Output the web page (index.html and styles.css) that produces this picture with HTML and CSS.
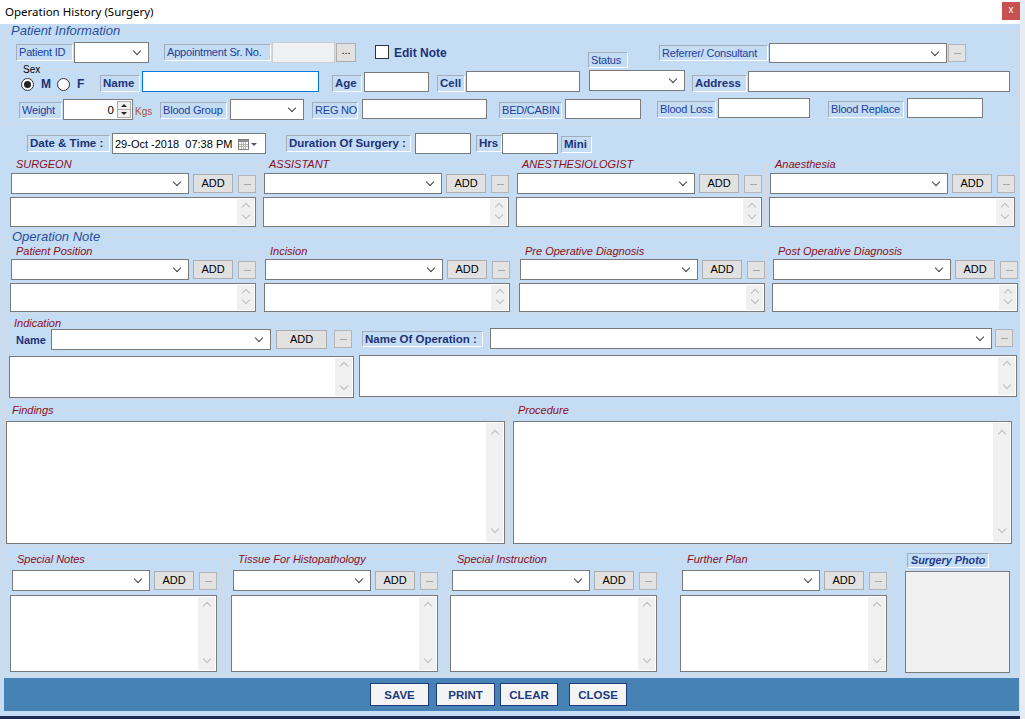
FILE: index.html
```html
<!DOCTYPE html>
<html lang="en">
  <head>
    <meta charset="UTF-8" />
    <title>Operation History (Surgery)</title>
    <link rel="stylesheet" href="styles.css">
  </head>
  <body>
    <div class="screen">
      <div class="window">
        <div class="titlebar">
          <span class="title">Operation History (Surgery)</span>
          <span class="close">x</span>
        </div>

        <div class="client">
          <!-- Patient information -->
          <fieldset class="patient">
            <legend>Patient Information</legend>
            <div class="row r1">
              <span class="lb pid-l">Patient ID</span>
              <span class="cb pid-c"></span>
              <span class="lb appt-l">Appointment Sr. No.</span>
              <span class="tb dis appt-t"></span>
              <span class="dots appt-b">...</span>
              <span class="chk edit-chk"></span>
              <span class="edit-txt">Edit Note</span>
              <span class="lb status-l">Status</span>
              <span class="lb ref-l">Referrer/ Consultant</span>
              <span class="cb ref-c"></span>
              <span class="mini ref-b"></span>
            </div>
            <div class="row r2">
              <fieldset class="sex">
                <legend>Sex</legend>
                <div class="opts">
                  <span class="radio on"></span><b class="opt-m">M</b>
                  <span class="radio opt-f"></span><b class="opt-ft">F</b>
                </div>
              </fieldset>
              <span class="lb b name-l">Name</span>
              <span class="tb name-t"></span>
              <span class="lb b age-l">Age</span>
              <span class="tb age-t"></span>
              <span class="lb b cell-l">Cell</span>
              <span class="tb cell-t"></span>
              <span class="cb status-c"></span>
              <span class="lb b addr-l">Address</span>
              <span class="tb addr-t"></span>
            </div>
            <div class="row r3">
              <span class="lb wt-l">Weight</span>
              <span class="tb num wt-n"><span class="val">0</span><span class="spin"><i></i><i></i></span></span>
              <span class="kgs">Kgs</span>
              <span class="lb bg-l">Blood Group</span>
              <span class="cb bg-c"></span>
              <span class="lb reg-l">REG NO</span>
              <span class="tb reg-t"></span>
              <span class="lb bed-l">BED/CABIN</span>
              <span class="tb bed-t"></span>
              <span class="lb loss-l">Blood Loss</span>
              <span class="tb loss-t"></span>
              <span class="lb repl-l">Blood Replace</span>
              <span class="tb repl-t"></span>
            </div>
          </fieldset>

          <!-- Date and duration -->
          <div class="row date-row">
            <span class="lb b dt-l">Date &amp; Time :</span>
            <span class="tb dtp">
              <span>29-Oct -2018&nbsp; 07:38 PM</span>
              <svg width="20" height="12" viewBox="0 0 20 12">
                <rect x="0.5" y="1.5" width="10" height="10" fill="#fff" stroke="#7d7d7d"/>
                <rect x="1" y="2" width="9" height="2" fill="#8c8c8c"/>
                <path d="M1 6.5H10M1 8.5H10M3.5 4V11M5.5 4V11M7.5 4V11" stroke="#b4b4b4"/>
                <path d="M13 5h6l-3 3z" fill="#4d5a73"/>
              </svg>
            </span>
            <span class="lb b dur-l">Duration Of Surgery :</span>
            <span class="tb dur-t"></span>
            <span class="lb b hrs-l">Hrs</span>
            <span class="tb hrs-t"></span>
            <span class="lb b min-l">Mini</span>
          </div>

          <!-- Team -->
          <div class="quad">
            <fieldset class="sec pick">
              <legend>SURGEON</legend>
              <div class="pick-row"><span class="cb"></span><span class="add">ADD</span><span class="mini"></span></div>
              <div class="memo"><span class="sb"></span></div>
            </fieldset>
            <fieldset class="sec pick">
              <legend>ASSISTANT</legend>
              <div class="pick-row"><span class="cb"></span><span class="add">ADD</span><span class="mini"></span></div>
              <div class="memo"><span class="sb"></span></div>
            </fieldset>
            <fieldset class="sec pick">
              <legend>ANESTHESIOLOGIST</legend>
              <div class="pick-row"><span class="cb"></span><span class="add">ADD</span><span class="mini"></span></div>
              <div class="memo"><span class="sb"></span></div>
            </fieldset>
            <fieldset class="sec pick">
              <legend>Anaesthesia</legend>
              <div class="pick-row"><span class="cb"></span><span class="add">ADD</span><span class="mini"></span></div>
              <div class="memo"><span class="sb"></span></div>
            </fieldset>
          </div>

          <!-- Operation note -->
          <fieldset class="opnote">
            <legend>Operation Note</legend>
            <div class="op-grid">
              <fieldset class="sec pick">
                <legend>Patient Position</legend>
                <div class="pick-row"><span class="cb"></span><span class="add">ADD</span><span class="mini"></span></div>
                <div class="memo"><span class="sb"></span></div>
              </fieldset>
              <fieldset class="sec pick">
                <legend>Incision</legend>
                <div class="pick-row"><span class="cb"></span><span class="add">ADD</span><span class="mini"></span></div>
                <div class="memo"><span class="sb"></span></div>
              </fieldset>
              <fieldset class="sec pick">
                <legend>Pre Operative Diagnosis</legend>
                <div class="pick-row"><span class="cb"></span><span class="add">ADD</span><span class="mini"></span></div>
                <div class="memo"><span class="sb"></span></div>
              </fieldset>
              <fieldset class="sec pick bare">
                <legend>Post Operative Diagnosis</legend>
                <div class="pick-row"><span class="cb"></span><span class="add">ADD</span><span class="mini"></span></div>
                <div class="memo"><span class="sb"></span></div>
              </fieldset>
            </div>

            <div class="ind-row">
              <fieldset class="sec ind">
                <legend>Indication</legend>
                <div class="row">
                  <span class="ind-name">Name</span>
                  <span class="cb ind-c"></span>
                  <span class="add">ADD</span>
                  <span class="mini"></span>
                </div>
                <div class="memo"><span class="sb"></span></div>
              </fieldset>
              <div class="noo">
                <div class="row noo-top">
                  <span class="lb b noo-l">Name Of Operation :</span>
                  <span class="cb noo-c"></span>
                  <span class="mini"></span>
                </div>
                <div class="memo"><span class="sb"></span></div>
              </div>
            </div>

            <div class="big-row">
              <fieldset class="sec big">
                <legend>Findings</legend>
                <div class="memo"><span class="sb"></span></div>
              </fieldset>
              <fieldset class="sec big proc">
                <legend>Procedure</legend>
                <div class="memo"><span class="sb"></span></div>
              </fieldset>
            </div>

            <div class="low-row">
              <fieldset class="sec low notes">
                <legend>Special Notes</legend>
                <div class="pick-row"><span class="cb"></span><span class="add">ADD</span><span class="mini"></span></div>
                <div class="memo"><span class="sb"></span></div>
              </fieldset>
              <fieldset class="sec low tissue">
                <legend>Tissue For Histopathology</legend>
                <div class="pick-row"><span class="cb"></span><span class="add">ADD</span><span class="mini"></span></div>
                <div class="memo"><span class="sb"></span></div>
              </fieldset>
              <fieldset class="sec low instr">
                <legend>Special Instruction</legend>
                <div class="pick-row"><span class="cb"></span><span class="add">ADD</span><span class="mini"></span></div>
                <div class="memo"><span class="sb"></span></div>
              </fieldset>
              <fieldset class="sec low plan">
                <legend>Further Plan</legend>
                <div class="pick-row"><span class="cb"></span><span class="add">ADD</span><span class="mini"></span></div>
                <div class="memo"><span class="sb"></span></div>
              </fieldset>
              <div class="photo">
                <span class="photo-l">Surgery Photo</span>
                <div class="photo-box"></div>
              </div>
            </div>
          </fieldset>

          <!-- Buttons -->
          <div class="footer">
            <button class="btn">SAVE</button>
            <button class="btn b-print">PRINT</button>
            <button class="btn b-clear">CLEAR</button>
            <button class="btn b-close">CLOSE</button>
          </div>
        </div>
      </div>
      <div class="edge"></div>
    </div>
  </body>
</html>
```

FILE: styles.css
```css
* {
  box-sizing: border-box;
}

body {
  margin: 0;
  font-family: "Liberation Sans", Arial, sans-serif;
  font-size: 11px;
  color: #000;
  background: #e6ecf2;
}

.screen {
  display: flex;
  width: 1025px;
  height: 719px;
  overflow: hidden;
}

.window {
  width: 1020px;
  height: 719px;
  display: flex;
  flex-direction: column;
  background: #c5dcf5;
  border-bottom: 3px solid #1d2b55;
}

.edge {
  width: 5px;
  background: #e6ecf2;
}

/* title bar */
.titlebar {
  height: 24px;
  flex: none;
  background: #fff;
  display: flex;
  justify-content: space-between;
  align-items: flex-start;
}

.title {
  margin: 4px 0 0 5px;
  font-family: "Noto Sans", "Liberation Sans", sans-serif;
  font-size: 11.5px;
  line-height: 15px;
}

.close {
  width: 18px;
  height: 18px;
  margin-top: 2px;
  background: #c75050;
  color: #fff;
  font-size: 10px;
  line-height: 16px;
  text-align: center;
}

/* common controls */
fieldset {
  margin: 0;
  padding: 0;
  min-width: 0;
  border: 1px solid #d3dae3;
}

legend {
  padding: 0 1px;
  font-style: italic;
}

.row {
  display: flex;
  align-items: flex-start;
}

.row > * {
  flex: none;
}

.lb {
  height: 17px;
  padding-left: 2px;
  border: 1px solid;
  border-color: #a3adb9 #fff #fff #a3adb9;
  color: #21409a;
  font-size: 11px;
  line-height: 15px;
  letter-spacing: -0.2px;
  white-space: nowrap;
  overflow: hidden;
}

.lb.b {
  font-weight: bold;
  font-size: 11.5px;
  letter-spacing: 0;
  color: #1c3378;
}

.tb {
  height: 21px;
  background: #fff;
  border: 1px solid #7a7a7a;
}

.tb.dis {
  background: #eff0f2;
  border-color: #cbcfd4;
}

.cb {
  height: 21px;
  background: #fff;
  border: 1px solid #7a7a7a;
  display: flex;
  align-items: center;
  justify-content: flex-end;
  padding-right: 8px;
}

.cb::after {
  content: "";
  width: 5px;
  height: 5px;
  margin-top: -3px;
  border-right: 1px solid #444;
  border-bottom: 1px solid #444;
  transform: rotate(45deg);
}

.dots {
  width: 20px;
  height: 19px;
  background: #e1e1e1;
  border: 1px solid #adadad;
  line-height: 13px;
  text-align: center;
}

.mini {
  width: 18px;
  height: 18px;
  flex: none;
  background: #e3e3e3;
  border: 1px solid #b4b4b4;
  display: flex;
  align-items: center;
  justify-content: center;
}

.mini::after {
  content: "";
  width: 7px;
  height: 1px;
  background: #a7a7a7;
}

.add {
  width: 40px;
  height: 19px;
  flex: none;
  margin: 1px 0 0 4px;
  background: #e1e1e1;
  border: 1px solid #adadad;
  line-height: 17px;
  text-align: center;
}

.chk {
  width: 14px;
  height: 14px;
  background: #fff;
  border: 1px solid #333;
}

.memo {
  background: #fff;
  border: 1px solid #7a7a7a;
  display: flex;
  justify-content: flex-end;
  padding: 1px;
}

.sb {
  width: 17px;
  background: #f0f0f0;
  display: flex;
  flex-direction: column;
  justify-content: space-between;
  align-items: center;
  padding: 5px 0 7px;
}

.sb::before,
.sb::after {
  content: "";
  width: 5px;
  height: 5px;
  border-left: 1px solid #bdbdbd;
  border-top: 1px solid #bdbdbd;
  transform: rotate(45deg);
}

.sb::after {
  transform: rotate(225deg);
}

/* patient information */
.patient {
  width: 1015px;
  margin-left: 4px;
  padding-bottom: 4px;
}

.patient > legend,
.opnote > legend {
  font-size: 13px;
  line-height: 14px;
  color: #2a4f96;
  margin-left: 5px;
}

.r1 { margin-top: 4px; height: 22px; }
.r2 { height: 32px; }
.r3 { height: 24px; }

.pid-l { width: 57px; margin: 2px 0 0 11px; }
.pid-c { width: 75px; margin-left: 1px; }
.appt-l { width: 107px; margin: 2px 0 0 15px; }
.appt-t { width: 63px; margin-left: 1px; }
.appt-b { margin: 1px 0 0 1px; }
.edit-chk { margin: 3px 0 0 19px; }

.edit-txt {
  width: 60px;
  margin: 4px 0 0 5px;
  font-weight: bold;
  font-size: 12px;
  line-height: 15px;
  color: #1c3378;
}

.status-l { width: 40px; height: 16px; line-height: 14px; margin: 10px 0 0 134px; }
.ref-l { width: 109px; height: 16px; line-height: 14px; margin: 3px 0 0 31px; }
.ref-c { width: 178px; height: 20px; margin: 1px 0 0 1px; }
.ref-b { margin: 2px 0 0 1px; }

.sex {
  width: 78px;
  height: 33px;
  margin-left: 10px;
}

.sex legend {
  font-style: normal;
  font-size: 10px;
  line-height: 11px;
  margin-left: 6px;
}

.opts {
  display: flex;
  align-items: center;
  margin: 2px 0 0 5px;
}

.opts b {
  font-size: 12px;
  color: #1c3378;
  margin-left: 7px;
}

.opt-f { margin-left: 6px; }

.radio {
  width: 13px;
  height: 13px;
  border: 1px solid #333;
  border-radius: 50%;
  background: #fff;
  display: flex;
  align-items: center;
  justify-content: center;
}

.radio.on::after {
  content: "";
  width: 7px;
  height: 7px;
  border-radius: 50%;
  background: #222;
}

.name-l { width: 40px; margin: 11px 0 0 7px; }
.name-t { width: 177px; margin: 7px 0 0 2px; border-color: #0078d7; }
.age-l { width: 30px; margin: 11px 0 0 13px; }
.age-t { width: 65px; height: 20px; margin: 8px 0 0 2px; }
.cell-l { width: 28px; margin: 11px 0 0 8px; }
.cell-t { width: 114px; margin: 7px 0 0 1px; }
.status-c { width: 96px; margin: 6px 0 0 9px; }
.addr-l { width: 55px; margin: 11px 0 0 7px; }
.addr-t { width: 262px; margin: 7px 0 0 1px; }

.wt-l { width: 43px; margin: 6px 0 0 14px; }
.wt-n { width: 70px; margin: 3px 0 0 1px; }

.num {
  display: flex;
  align-items: center;
  justify-content: flex-end;
  padding-right: 1px;
  font-size: 11.5px;
}

.num .val {
  margin-right: 3px;
}

.spin {
  width: 14px;
  height: 17px;
  display: flex;
  flex-direction: column;
  background: #f0f0f0;
  border: 1px solid #adadad;
}

.spin i {
  flex: 1;
  display: flex;
  align-items: center;
  justify-content: center;
}

.spin i::after {
  content: "";
  border-left: 3px solid transparent;
  border-right: 3px solid transparent;
  border-bottom: 3px solid #222;
}

.spin i + i {
  border-top: 1px solid #adadad;
}

.spin i + i::after {
  border-bottom: 0;
  border-top: 3px solid #222;
}

.kgs {
  width: 20px;
  margin: 10px 0 0 2px;
  font-size: 10px;
  line-height: 12px;
  color: #a9592a;
}

.bg-l { width: 67px; margin: 6px 0 0 5px; }
.bg-c { width: 74px; margin: 3px 0 0 3px; }
.reg-l { width: 46px; margin: 6px 0 0 8px; }
.reg-t { width: 125px; height: 20px; margin: 3px 0 0 4px; }
.bed-l { width: 63px; margin: 6px 0 0 12px; }
.bed-t { width: 76px; height: 20px; margin: 3px 0 0 3px; }
.loss-l { width: 59px; margin: 5px 0 0 16px; }
.loss-t { width: 92px; height: 20px; margin: 2px 0 0 2px; }
.repl-l { width: 76px; margin: 5px 0 0 18px; }
.repl-t { width: 76px; height: 20px; margin: 2px 0 0 3px; }

/* date row */
.date-row { margin-top: 8px; height: 21px; }
.dt-l { width: 83px; margin: 2px 0 0 27px; }

.dtp {
  width: 154px;
  margin-left: 2px;
  display: flex;
  align-items: center;
  justify-content: space-between;
  padding: 0 7px 0 2px;
  font-size: 11px;
}

.dur-l { width: 125px; margin: 2px 0 0 20px; }
.dur-t { width: 56px; margin-left: 4px; }
.hrs-l { width: 26px; margin: 2px 0 0 5px; }
.hrs-t { width: 56px; }
.min-l { width: 31px; margin: 3px 0 0 3px; }

/* picker groups */
.sec > legend {
  font-size: 11px;
  line-height: 12px;
  color: #8b0f1a;
  margin-left: 7px;
}

.pick {
  width: 252px;
  padding-bottom: 2px;
}

.pick-row {
  display: flex;
  align-items: flex-start;
  margin: 3px 0 0 3px;
}

.pick-row .cb {
  width: 178px;
  flex: none;
}

.pick-row .mini {
  margin: 2px 0 0 5px;
}

.pick .memo {
  width: 246px;
  height: 30px;
  margin: 3px 0 0 2px;
}

.quad {
  display: grid;
  grid-template-columns: repeat(4, 252px);
  column-gap: 1px;
  margin: 4px 0 0 7px;
}

/* operation note */
.opnote {
  width: 1018px;
  margin-left: 2px;
}

.opnote > legend {
  margin-left: 8px;
}

.op-grid {
  display: grid;
  grid-template-columns: 252px 253px 251px 249px;
  column-gap: 2px;
  margin: 1px 0 0 4px;
}

.op-grid .pick {
  width: auto;
  padding-bottom: 1px;
}

.op-grid .pick-row {
  margin-top: 2px;
}

.op-grid .memo {
  height: 29px;
}

.pick.bare {
  border-color: transparent;
}

.ind-row {
  display: flex;
  align-items: flex-start;
  margin: 3px 0 0 3px;
}

.ind {
  width: 352px;
  flex: none;
  padding-bottom: 1px;
}

.ind > legend,
.big > legend {
  margin-left: 6px;
}

.ind-name {
  width: 30px;
  margin: 5px 0 0 9px;
  font-weight: bold;
  line-height: 13px;
  color: #1c3378;
}

.ind-c { width: 220px; margin-left: 5px; }
.ind .add { width: 51px; margin-left: 5px; }
.ind .mini { margin: 1px 0 0 7px; }

.ind .memo {
  width: 345px;
  height: 42px;
  margin: 6px 0 0 2px;
}

.noo {
  width: 659px;
  margin-left: 1px;
}

.noo-top { margin-top: 11px; }
.noo-l { width: 121px; height: 16px; line-height: 14px; margin: 3px 0 0 3px; }
.noo-c { width: 502px; margin-left: 7px; }
.noo .mini { margin: 1px 0 0 3px; }

.noo .memo {
  width: 658px;
  height: 42px;
  margin-top: 6px;
}

.big-row {
  display: flex;
  margin: 4px 0 0 1px;
}

.big {
  width: 503px;
  padding-bottom: 2px;
}

.big .memo {
  width: 499px;
  height: 123px;
  margin: 5px 0 0 1px;
}

.big .sb {
  padding: 8px 0 10px;
}

.big.proc {
  width: 506px;
  margin-left: 3px;
}

.big.proc .memo {
  margin-left: 2px;
}

.low-row {
  display: flex;
  align-items: flex-start;
  margin: 6px 0 0 4px;
}

.low {
  flex: none;
  padding-bottom: 2px;
}

.low > legend {
  margin-left: 8px;
}

.low .pick-row {
  margin: 5px 0 0 4px;
}

.low .pick-row .cb {
  width: 138px;
}

.low .memo {
  width: 207px;
  height: 77px;
  margin: 4px 0 0 2px;
}

.low .sb {
  padding: 6px 0 8px;
}

.notes { width: 216px; }
.tissue { width: 215px; margin-left: 5px; }
.instr { width: 215px; margin-left: 4px; }
.plan { width: 214px; margin-left: 15px; }

.photo {
  width: 105px;
  margin-left: 14px;
}

.photo-l {
  display: block;
  width: 82px;
  height: 15px;
  margin-left: 2px;
  padding-left: 3px;
  border: 1px solid;
  border-color: #a3adb9 #fff #fff #a3adb9;
  font-weight: bold;
  font-style: italic;
  font-size: 10.8px;
  line-height: 13px;
  color: #1c3a8a;
}

.photo-box {
  height: 102px;
  margin-top: 3px;
  background: #f0f0f0;
  border: 1px solid #7a7a7a;
}

/* footer */
.footer {
  width: 1015px;
  height: 33px;
  margin: 2px 0 0 4px;
  padding: 5px 0 0 366px;
  display: flex;
  align-items: flex-start;
  background: #4682b4;
}

.btn {
  width: 59px;
  height: 23px;
  padding: 0;
  background: #f4f4f4;
  border: 1px solid #1f3b7d;
  font-family: inherit;
  font-weight: bold;
  font-size: 11.5px;
  color: #1c3a80;
}

.b-print { margin-left: 7px; }
.b-clear { width: 58px; margin-left: 5px; }
.b-close { width: 58px; margin-left: 11px; }
```
